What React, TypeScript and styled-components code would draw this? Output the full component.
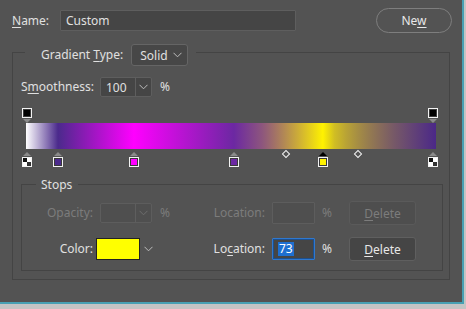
import React from 'react';
import styled, { createGlobalStyle, css } from 'styled-components';

const Global = createGlobalStyle`
  html, body { margin: 0; padding: 0; background: #c4c4c4; }
  body { font-family: "Noto Sans", "Open Sans", sans-serif; font-size: 12px; color: #e0e0e0; }
  * { box-sizing: border-box; }
`;

const Dialog = styled.div`
  width: 464px;
  height: 304px;
  background: #535353;
  border-right: 2px solid #47a0b3;
  border-bottom: 2px solid #47a0b3;
  padding: 8px 10px 0 12px;
  display: flex;
  flex-direction: column;
`;

const Header = styled.div`
  display: flex;
  align-items: center;
  height: 25px;
`;

const U = styled.span`
  text-decoration: underline;
  text-underline-offset: 2px;
`;

const Label = styled.span<{ $w?: number; $right?: boolean; $dim?: boolean }>`
  display: inline-block;
  flex: none;
  white-space: nowrap;
  width: ${(p) => (p.$w ? `${p.$w}px` : 'auto')};
  text-align: ${(p) => (p.$right ? 'right' : 'left')};
  color: ${(p) => (p.$dim ? '#7c7c7c' : '#e0e0e0')};
  line-height: 16px;
`;

const TextField = styled.div<{ $w: number; $h: number; $dim?: boolean; $focus?: boolean }>`
  flex: none;
  width: ${(p) => p.$w}px;
  height: ${(p) => p.$h}px;
  background: ${(p) => (p.$dim ? '#4f4f4f' : '#454545')};
  border: 1px solid ${(p) => (p.$focus ? '#2f78cf' : p.$dim ? '#5d5d5d' : '#5e5e5e')};
  ${(p) => p.$focus && css`box-shadow: 0 0 0 1px #1d4f8c inset;`}
  border-radius: 1px;
  display: flex;
  align-items: center;
  padding-left: 5px;
  color: #e0e0e0;
`;

const Selected = styled.span`
  background: #1e6fd0;
  color: #ffffff;
  padding: 0 1px;
  line-height: 14px;
`;

const PillButton = styled.button`
  margin-left: auto;
  width: 76px;
  height: 25px;
  border-radius: 13px;
  border: 1px solid #7e7e7e;
  background: #535353;
  color: #e8e8e8;
  font: inherit;
  padding: 0;
`;

const Fieldset = styled.fieldset<{ $w: number; $h: number; $ml?: number; $mt?: number }>`
  margin: ${(p) => p.$mt ?? 0}px 0 0 ${(p) => p.$ml ?? 0}px;
  padding: 0;
  width: ${(p) => p.$w}px;
  height: ${(p) => p.$h}px;
  border: 1px solid #444444;
  min-inline-size: 0;
`;

const Legend = styled.legend<{ $ml: number; $pad: string }>`
  margin-left: ${(p) => p.$ml}px;
  padding: ${(p) => p.$pad};
`;

const LegendRow = styled.div`
  display: flex;
  align-items: center;
  gap: 8px;
`;

const Select = styled.div`
  width: 57px;
  height: 22px;
  border: 1px solid #656565;
  border-radius: 3px;
  background: #474747;
  display: flex;
  align-items: center;
  justify-content: space-between;
  padding: 0 5px 0 8px;
`;

const Row = styled.div<{ $mt: number; $pl: number; $h: number }>`
  display: flex;
  align-items: center;
  margin-top: ${(p) => p.$mt}px;
  padding-left: ${(p) => p.$pl}px;
  height: ${(p) => p.$h}px;
`;

const ComboField = styled.div<{ $dim?: boolean }>`
  flex: none;
  width: 52px;
  height: 20px;
  display: flex;
  background: ${(p) => (p.$dim ? '#4f4f4f' : '#454545')};
  border: 1px solid ${(p) => (p.$dim ? '#5d5d5d' : '#5e5e5e')};
  border-radius: 2px;
  color: #e0e0e0;
`;

const ComboText = styled.div`
  flex: 1;
  display: flex;
  align-items: center;
  padding-left: 5px;
  border-right: 1px solid #5e5e5e;
`;

const ComboArrow = styled.div`
  width: 15px;
  display: flex;
  align-items: center;
  justify-content: center;
`;

const Spacer = styled.span<{ $w: number }>`
  flex: none;
  width: ${(p) => p.$w}px;
`;

const Editor = styled.div`
  position: relative;
  margin: 9px 0 0 13px;
  padding-top: 17px;
  width: 410px;
  height: 62px;
`;

const Bar = styled.div`
  height: 26px;
  background: linear-gradient(
    to right,
    #ffffff 0%,
    #4b2a8c 7.8%,
    #ff00ff 26.3%,
    #6c28a2 50.7%,
    63.4%,
    #fff200 72.4%,
    81%,
    #4b2888 100%
  );
`;

const Stop = styled.div<{ $top: number }>`
  position: absolute;
  top: ${(p) => p.$top}px;
  width: 10px;
  display: flex;
  flex-direction: column;
  align-items: center;
`;

const Swatch = styled.div<{ $fill: string; $checker?: boolean }>`
  width: 10px;
  height: 10px;
  border: 1px solid #f2f2f2;
  box-shadow: inset 0 0 0 1px #3a3a3a;
  background: ${(p) =>
    p.$checker
      ? 'conic-gradient(#ffffff 0 25%, #333333 0 50%, #ffffff 0 75%, #111111 0)'
      : p.$fill};
  ${(p) => p.$checker && css`box-shadow: none;`}
`;

const TriDown = styled.div`
  width: 0;
  height: 0;
  margin-top: 1px;
  border-left: 4px solid transparent;
  border-right: 4px solid transparent;
  border-top: 4px solid #8a8a8a;
`;

const TriUp = styled.div<{ $active?: boolean }>`
  width: 0;
  height: 0;
  margin-bottom: 1px;
  border-left: 4px solid transparent;
  border-right: 4px solid transparent;
  border-bottom: 4px solid ${(p) => (p.$active ? '#000000' : '#8a8a8a')};
`;

const Diamond = styled.div`
  position: absolute;
  top: 45px;
  width: 6px;
  height: 6px;
  border: 1px solid #f4f4f4;
  transform: rotate(45deg);
`;

const ColorSwatch = styled.div`
  flex: none;
  width: 44px;
  height: 22px;
  background: #ffff00;
  border: 1px solid #222222;
`;

const ActionButton = styled.button<{ $dim?: boolean }>`
  flex: none;
  width: 67px;
  height: 24px;
  border-radius: 3px;
  font: inherit;
  padding: 0;
  background: ${(p) => (p.$dim ? '#4e4e4e' : '#454545')};
  border: 1px solid ${(p) => (p.$dim ? '#5a5a5a' : '#5f5f5f')};
  color: ${(p) => (p.$dim ? '#7c7c7c' : '#e8e8e8')};
`;

const Chevron = ({ color = '#bdbdbd' }: { color?: string }) => (
  <svg width="9" height="6" viewBox="0 0 9 6">
    <polyline points="0.5,0.8 4.5,4.8 8.5,0.8" fill="none" stroke={color} strokeWidth="1" />
  </svg>
);

const loc = (l: number) => 1 + (l / 100) * 406 - 5;

const colorStops = [
  { l: 0, fill: '#fff', checker: true },
  { l: 7.6, fill: '#4b2a8c' },
  { l: 26.4, fill: '#ff00ff' },
  { l: 51, fill: '#6c28a2' },
  { l: 73, fill: '#fff200', active: true },
  { l: 100, fill: '#fff', checker: true },
];

export default function App() {
  return (
    <>
      <Global />
      <Dialog>
        <Header>
          <Label $w={48}>
            <U>N</U>ame:
          </Label>
          <TextField $w={236} $h={21}>Custom</TextField>
          <PillButton>
            Ne<U>w</U>
          </PillButton>
        </Header>

        <Fieldset $w={438} $h={242} $mt={5}>
          <Legend $ml={12} $pad="6px 8px 0 16px">
            <LegendRow>
              <Label>
                Gradient <U>T</U>ype:
              </Label>
              <Select>
                <span>Solid</span>
                <Chevron />
              </Select>
            </LegendRow>
          </Legend>

          <Row $mt={11} $pl={8} $h={20}>
            <Label $w={79}>
              S<U>m</U>oothness:
            </Label>
            <ComboField>
              <ComboText>100</ComboText>
              <ComboArrow>
                <Chevron />
              </ComboArrow>
            </ComboField>
            <Spacer $w={8} />
            <Label>%</Label>
          </Row>

          <Editor>
            <Stop $top={2} style={{ left: loc(0) }}>
              <Swatch $fill="#000" />
              <TriDown />
            </Stop>
            <Stop $top={2} style={{ left: loc(100) }}>
              <Swatch $fill="#000" />
              <TriDown />
            </Stop>
            <Bar />
            {colorStops.map((s, i) => (
              <Stop key={i} $top={46} style={{ left: loc(s.l) }}>
                <TriUp $active={s.active} />
                <Swatch $fill={s.fill} $checker={s.checker} />
              </Stop>
            ))}
            <Diamond style={{ left: 257 }} />
            <Diamond style={{ left: 329 }} />
          </Editor>

          <Fieldset $w={422} $h={95} $ml={8} $mt={8}>
            <Legend $ml={14} $pad="0 6px 0 5px">
              <Label>Stops</Label>
            </Legend>

            <Row $mt={8} $pl={0} $h={24}>
              <Label $w={71} $right $dim>
                Opacity:
              </Label>
              <Spacer $w={7} />
              <ComboField $dim>
                <ComboText />
                <ComboArrow>
                  <Chevron color="#6e6e6e" />
                </ComboArrow>
              </ComboField>
              <Spacer $w={8} />
              <Label $w={12} $dim>
                %
              </Label>
              <Label $w={93} $right $dim>
                Location:
              </Label>
              <Spacer $w={7} />
              <TextField $w={43} $h={22} $dim />
              <Spacer $w={7} />
              <Label $w={12} $dim>
                %
              </Label>
              <Spacer $w={15} />
              <ActionButton $dim>
                <U>D</U>elete
              </ActionButton>
            </Row>

            <Row $mt={12} $pl={0} $h={24}>
              <Label $w={71} $right>
                Color:
              </Label>
              <Spacer $w={3} />
              <ColorSwatch />
              <Spacer $w={4} />
              <Chevron />
              <Label $w={112} $right>
                Lo<U>c</U>ation:
              </Label>
              <Spacer $w={7} />
              <TextField $w={43} $h={22} $focus>
                <Selected>73</Selected>
              </TextField>
              <Spacer $w={7} />
              <Label $w={12}>%</Label>
              <Spacer $w={15} />
              <ActionButton>
                <U>D</U>elete
              </ActionButton>
            </Row>
          </Fieldset>
        </Fieldset>
      </Dialog>
    </>
  );
}
